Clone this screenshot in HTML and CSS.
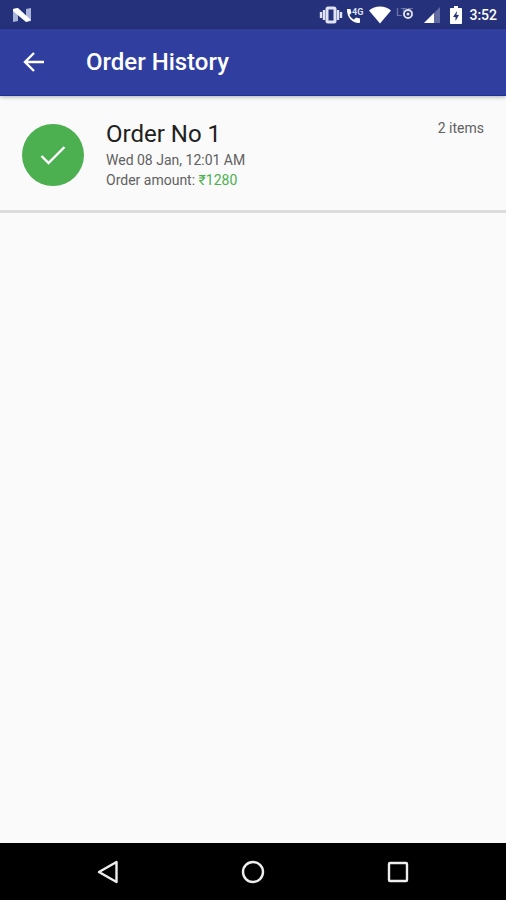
FILE: index.html
```html
<!DOCTYPE html>
<html lang="en">
<head>
    <meta charset="UTF-8">
    <meta name="viewport" content="width=device-width, initial-scale=1">
    <title>Order History</title>
    <link rel="stylesheet" href="styles.css">
</head>
<body>
    <!-- Status bar -->
    <div class="status-bar">
        <svg class="status-logo" width="20" height="16" viewBox="0 0 20 16">
            <path d="M1 2l5-1v13l-5 1zM14 2l5-1v13l-5 1z" fill="#aab4d8"/>
            <path d="M1 2l5-1 13 12-5 2L1 4z" fill="#fff"/>
        </svg>
        <div class="status-icons">
            <svg width="24" height="18" viewBox="0 0 24 18">
                <path d="M2 6v6M5 4v10M19 4v10M22 6v6" stroke="#dfe2f1" stroke-width="2.400"/>
                <rect x="8" y="2" width="8" height="14" rx="1" fill="none" stroke="#dfe2f1" stroke-width="3"/>
            </svg>
            <svg width="20" height="18" viewBox="0 0 20 18">
                <path d="M1 3h3.500l1 4-2 2c1 2 2.500 3.500 4.500 4.500l2-2 4 1V16c0 .6-.4 1-1 1C6 17 1 11 1 4z" fill="#fff"/>
                <text class="network-label" x="6" y="9">4G</text>
            </svg>
            <svg width="22" height="18" viewBox="0 0 22 18">
                <path d="M11 17.500L0 4.500C3 2 7 .5 11 .5s8 1.500 11 4z" fill="#fff"/>
            </svg>
            <svg class="lte-icon" width="24" height="20" viewBox="0 0 24 20">
                <text class="lte-label" x="0" y="11">LTE</text>
                <circle cx="12" cy="9" r="4" fill="#26317b" stroke="#dfe2f1" stroke-width="1.800"/>
                <circle cx="12" cy="9" r="1.500" fill="#dfe2f1"/>
            </svg>
            <svg width="18" height="18" viewBox="0 0 18 18">
                <path d="M17 1v16H1z" fill="#626b9f"/>
                <path d="M11 7v10H1z" fill="#fff"/>
            </svg>
            <svg class="battery-icon" width="12" height="18" viewBox="0 0 12 18">
                <path d="M4 0h4v2h3c.6 0 1 .4 1 1v14c0 .6-.4 1-1 1H1c-.6 0-1-.4-1-1V3c0-.6.4-1 1-1h3z" fill="#fff"/>
                <path d="M7 5L3 11h2.500v4L9 9H6.500z" fill="#26317b"/>
            </svg>
            <span class="clock">3:52</span>
        </div>
    </div>

    <!-- App bar -->
    <header class="app-bar">
        <button class="back-button" type="button" aria-label="Back">
            <svg width="22" height="22" viewBox="0 0 22 22">
                <path d="M21 11H2.500M11 2l-9 9 9 9" fill="none" stroke="#fff" stroke-width="2.400"/>
            </svg>
        </button>
        <h1>Order History</h1>
    </header>

    <!-- Orders -->
    <main class="orders">
        <article class="order">
            <div class="order-status">
                <svg width="26" height="20" viewBox="0 0 26 20">
                    <path d="M1.500 11l7 7L24.500 2" fill="none" stroke="#fff" stroke-width="2.400"/>
                </svg>
            </div>
            <div class="order-info">
                <h2>Order No 1</h2>
                <p>Wed 08 Jan, 12:01 AM</p>
                <p>Order amount: <span class="amount">₹1280</span></p>
            </div>
            <div class="order-items">2 items</div>
        </article>
    </main>

    <!-- System navigation -->
    <nav class="nav-bar">
        <button type="button" aria-label="Back">
            <svg width="24" height="24" viewBox="0 0 24 24">
                <path d="M20.500 2v20L3 12z" fill="none" stroke="#eee" stroke-width="2.400" stroke-linejoin="round"/>
            </svg>
        </button>
        <button type="button" aria-label="Home">
            <svg width="24" height="24" viewBox="0 0 24 24">
                <circle cx="12" cy="12" r="10" fill="none" stroke="#eee" stroke-width="2.400"/>
            </svg>
        </button>
        <button type="button" aria-label="Recent apps">
            <svg width="24" height="24" viewBox="0 0 24 24">
                <rect x="3" y="3" width="18" height="18" rx="1" fill="none" stroke="#eee" stroke-width="2.400"/>
            </svg>
        </button>
    </nav>
</body>
</html>
```
FILE: styles.css
```css
* {
    margin: 0;
    padding: 0;
    box-sizing: border-box;
}

body {
    font-family: Roboto, sans-serif;
    background: #fafafa;
    color: #212121;
    min-height: 100vh;
    display: flex;
    flex-direction: column;
}

svg {
    display: block;
}

button {
    background: none;
    border: none;
    cursor: pointer;
}

.status-bar {
    display: flex;
    align-items: center;
    justify-content: space-between;
    height: 29px;
    padding: 0 9px 0 12px;
    background: #26317b;
}

.status-icons {
    display: flex;
    align-items: center;
    gap: 3px;
}

.network-label {
    font-size: 9px;
    font-weight: bold;
    fill: #dfe2f1;
}

.lte-label {
    font-size: 11px;
    fill: #7981b0;
}

.lte-icon {
    margin-left: 2px;
}

.battery-icon {
    margin: 0 4px 0 6px;
}

.clock {
    font-size: 14px;
    font-weight: 500;
    color: #fff;
}

.app-bar {
    display: flex;
    align-items: center;
    gap: 41px;
    height: 67px;
    padding: 0 23px;
    background: #303f9f;
    border-bottom: 1px solid #1f3396;
    box-shadow: 0 1px 4px rgba(0, 0, 0, 0.3);
}

.app-bar h1 {
    font-size: 24px;
    font-weight: 500;
    color: #fff;
}

.orders {
    flex: 1;
}

.order {
    display: flex;
    align-items: flex-start;
    gap: 22px;
    padding: 22px 22px 20px;
    border-bottom: 3px solid #dcdcdc;
}

.order-status {
    display: flex;
    align-items: center;
    justify-content: center;
    width: 62px;
    height: 62px;
    margin-top: 6px;
    border-radius: 50%;
    background: #4caf50;
}

.order-info {
    flex: 1;
}

.order-info h2 {
    font-size: 24px;
    font-weight: 400;
    line-height: 32px;
}

.order-info p {
    font-size: 14px;
    line-height: 20px;
    color: #616161;
}

.order-info .amount {
    color: #4caf50;
}

.order-items {
    font-size: 14px;
    line-height: 20px;
    color: #616161;
}

.nav-bar {
    display: flex;
    align-items: center;
    justify-content: space-between;
    height: 57px;
    padding: 0 19%;
    background: #000;
}
```
